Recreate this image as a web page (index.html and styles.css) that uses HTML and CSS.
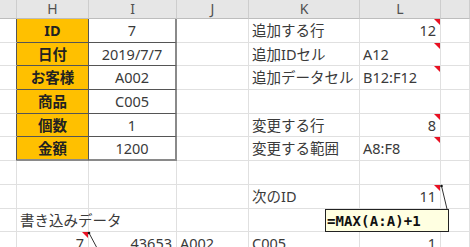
FILE: index.html
```html
<!DOCTYPE html>
<html lang="ja">
<head>
    <meta charset="UTF-8">
    <title>書き込みデータ</title>
    <link rel="stylesheet" href="styles.css">
</head>
<body>
    <div class="sheet">
        <!-- column headers -->
        <div class="hd"></div>
        <div class="hd">H</div>
        <div class="hd">I</div>
        <div class="hd">J</div>
        <div class="hd">K</div>
        <div class="hd">L</div>
        <div class="hd"></div>

        <!-- row 1 -->
        <div class="c edge"></div>
        <div class="c lab">ID</div>
        <div class="c val">7</div>
        <div class="c"></div>
        <div class="c txt">追加する行</div>
        <div class="c num note">12</div>
        <div class="c"></div>

        <!-- row 2 -->
        <div class="c edge"></div>
        <div class="c lab">日付</div>
        <div class="c val">2019/7/7</div>
        <div class="c"></div>
        <div class="c txt">追加IDセル</div>
        <div class="c txt note">A12</div>
        <div class="c"></div>

        <!-- row 3 -->
        <div class="c edge"></div>
        <div class="c lab">お客様</div>
        <div class="c val">A002</div>
        <div class="c"></div>
        <div class="c txt">追加データセル</div>
        <div class="c txt note">B12:F12</div>
        <div class="c"></div>

        <!-- row 4 -->
        <div class="c edge"></div>
        <div class="c lab">商品</div>
        <div class="c val">C005</div>
        <div class="c"></div>
        <div class="c"></div>
        <div class="c"></div>
        <div class="c"></div>

        <!-- row 5 -->
        <div class="c edge"></div>
        <div class="c lab">個数</div>
        <div class="c val">1</div>
        <div class="c"></div>
        <div class="c txt">変更する行</div>
        <div class="c num note">8</div>
        <div class="c"></div>

        <!-- row 6 -->
        <div class="c edge"></div>
        <div class="c lab last">金額</div>
        <div class="c val last">1200</div>
        <div class="c"></div>
        <div class="c txt">変更する範囲</div>
        <div class="c txt note">A8:F8</div>
        <div class="c"></div>

        <!-- row 7 -->
        <div class="c"></div>
        <div class="c"></div>
        <div class="c"></div>
        <div class="c"></div>
        <div class="c"></div>
        <div class="c"></div>
        <div class="c"></div>

        <!-- row 8 -->
        <div class="c"></div>
        <div class="c"></div>
        <div class="c"></div>
        <div class="c"></div>
        <div class="c txt">次のID</div>
        <div class="c num note">11</div>
        <div class="c"></div>

        <!-- row 9 -->
        <div class="c"></div>
        <div class="c txt spill">書き込みデータ</div>
        <div class="c"></div>
        <div class="c"></div>
        <div class="c"></div>
        <div class="c"></div>
        <div class="c"></div>

        <!-- row 10 -->
        <div class="c"></div>
        <div class="c num note">7</div>
        <div class="c num">43653</div>
        <div class="c txt">A002</div>
        <div class="c txt">C005</div>
        <div class="c num">1</div>
        <div class="c"></div>

        <!-- comment connectors -->
        <svg class="links" width="470" height="247" viewBox="0 0 470 247">
            <line x1="441.5" y1="186" x2="447" y2="209" />
            <circle cx="441.5" cy="186" r="1.3" />
            <line x1="89" y1="233" x2="97" y2="248" />
            <circle cx="89" cy="233" r="1.3" />
        </svg>

        <div class="comment">=MAX(A:A)+1</div>
    </div>
</body>
</html>
```

FILE: styles.css
```css
body {
    margin: 0;
    background: white;
    overflow: hidden;
}

.sheet {
    position: relative;
    display: grid;
    grid-template-columns: 17px 72px 88px 72px 111px 81px 29px;
    grid-template-rows: 19px 24px 23px 24px 24px 23px 24px 24px 24px 23px 24px;
    width: 470px;
    font-family: "Noto Sans", "Noto Sans CJK JP", sans-serif;
    font-size: 14.5px;
    color: #3a3a3a;
}

.hd {
    box-sizing: border-box;
    display: flex;
    align-items: center;
    justify-content: center;
    background: #e6e6e6;
    border-right: 1px solid #cdcdcd;
    border-bottom: 1px solid #bdbdbd;
    color: #505050;
    font-size: 14px;
    line-height: 1;
}

.c {
    box-sizing: border-box;
    display: flex;
    align-items: center;
    position: relative;
    border-right: 1px solid #e0e0e0;
    border-bottom: 1px solid #e0e0e0;
    line-height: 1;
    white-space: nowrap;
}

.txt {
    padding-left: 3px;
}

.num {
    justify-content: flex-end;
    padding-right: 4px;
}

.spill {
    overflow: visible;
}

/* left edge of the input table */
.edge {
    border-right-color: #555;
}

.lab {
    justify-content: center;
    background: #ffc000;
    font-weight: bold;
    color: #222;
    border-right-color: #555;
    border-bottom-color: #555;
}

.val {
    justify-content: center;
    border-right: 2px solid #8a8a8a;
    border-bottom-color: #555;
}

.last {
    border-bottom: 2px solid #8a8a8a;
}

/* red corner marker for cells that carry a note */
.note::after {
    content: "";
    position: absolute;
    top: 0;
    right: 0;
    border-top: 6px solid #e81123;
    border-left: 6px solid transparent;
}

.links {
    position: absolute;
    left: 0;
    top: 0;
    pointer-events: none;
}

.links line {
    stroke: #333;
    stroke-width: 1;
}

.links circle {
    fill: #111;
}

.comment {
    position: absolute;
    left: 325px;
    top: 209px;
    width: 124px;
    height: 23px;
    box-sizing: border-box;
    padding-left: 1px;
    display: flex;
    align-items: center;
    background: #ffffe1;
    border: 1px solid #222;
    font-family: "DejaVu Sans Mono", monospace;
    font-weight: bold;
    font-size: 14px;
    letter-spacing: 0.1px;
    color: #111;
}
```
